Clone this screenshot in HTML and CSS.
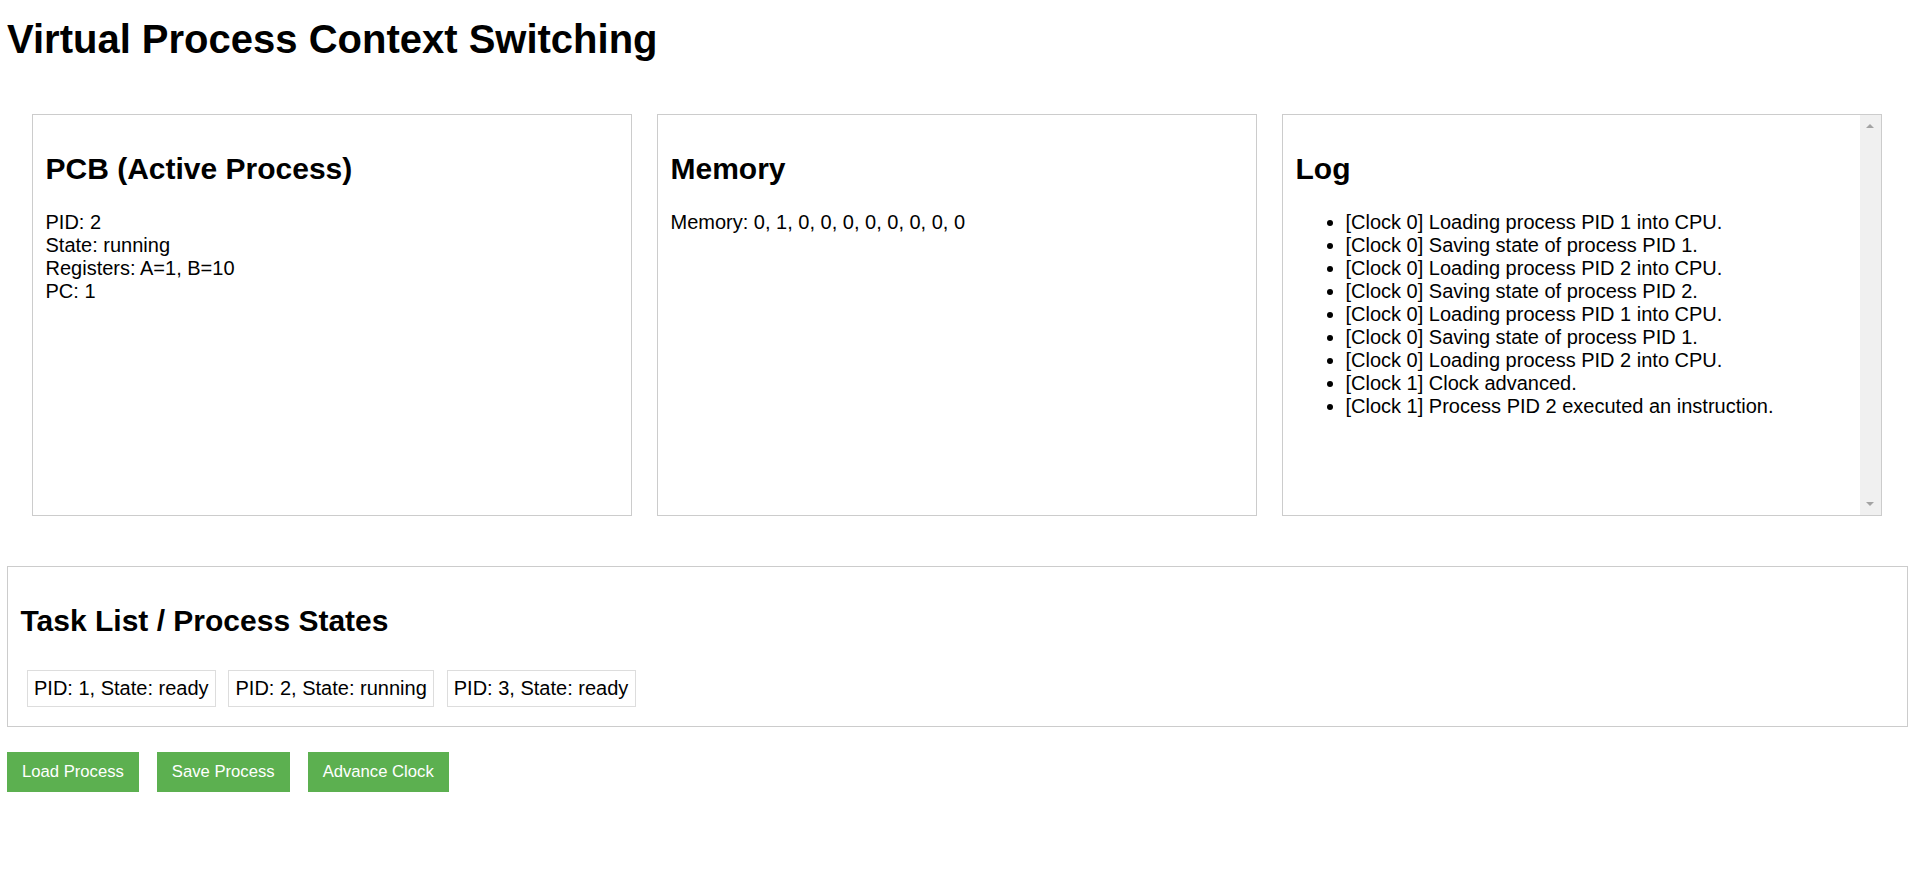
FILE: index.html
```html
<!DOCTYPE html>
<html lang="en">
<head>
<meta charset="utf-8">
<title>Virtual Process Context Switching</title>
<link rel="stylesheet" href="styles.css">
</head>
<body>
<h1 class="title">Virtual Process Context Switching</h1>
<div class="panels">
  <section class="panel">
    <h2 class="panel-title">PCB (Active Process)</h2>
    <div class="line">PID: 2</div>
    <div class="line">State: running</div>
    <div class="line">Registers: A=1, B=10</div>
    <div class="line">PC: 1</div>
  </section>
  <section class="panel">
    <h2 class="panel-title">Memory</h2>
    <div class="line">Memory: 0, 1, 0, 0, 0, 0, 0, 0, 0, 0</div>
  </section>
  <section class="panel log">
    <h2 class="panel-title">Log</h2>
    <ul class="log-list">
      <li>[Clock 0] Loading process PID 1 into CPU.</li>
      <li>[Clock 0] Saving state of process PID 1.</li>
      <li>[Clock 0] Loading process PID 2 into CPU.</li>
      <li>[Clock 0] Saving state of process PID 2.</li>
      <li>[Clock 0] Loading process PID 1 into CPU.</li>
      <li>[Clock 0] Saving state of process PID 1.</li>
      <li>[Clock 0] Loading process PID 2 into CPU.</li>
      <li>[Clock 1] Clock advanced.</li>
      <li>[Clock 1] Process PID 2 executed an instruction.</li>
    </ul>
    <div class="scrollbar" aria-hidden="true">
      <span class="arrow arrow-up"></span>
      <span class="arrow arrow-down"></span>
    </div>
  </section>
</div>
<section class="tasks">
  <h2 class="panel-title">Task List / Process States</h2>
  <div class="task-row">
    <div class="task">PID: 1, State: ready</div>
    <div class="task">PID: 2, State: running</div>
    <div class="task">PID: 3, State: ready</div>
  </div>
</section>
<div class="controls">
  <button class="btn">Load Process</button>
  <button class="btn">Save Process</button>
  <button class="btn">Advance Clock</button>
</div>
</body>
</html>
```
FILE: styles.css
```css
html, body {
  background: #ffffff;
}
body {
  margin: 0;
  padding: 8px 8px 8px 7px;
  font-family: "Liberation Sans", Arial, sans-serif;
  font-size: 20px;
  color: #000;
}
.title {
  margin: 9px 0 52px;
  font-size: 40px;
  font-weight: bold;
}
.panels {
  display: flex;
  gap: 25px;
  padding: 0 26px 0 25px;
}
.panel {
  flex: 0 0 600px;
  box-sizing: border-box;
  height: 402px;
  border: 1px solid #cccccc;
  padding: 12.5px;
}
.panel-title {
  font-size: 30px;
  font-weight: bold;
  margin: 24.9px 0;
}
.log {
  position: relative;
  overflow: hidden;
  padding-right: 33.5px;
}
.log-list {
  margin: 20px 0;
  padding-left: 50px;
}
.scrollbar {
  position: absolute;
  top: 0;
  right: 0;
  bottom: 0;
  width: 21px;
  background: #f0f0f0;
}
.arrow {
  position: absolute;
  left: 6px;
  width: 0;
  height: 0;
  border-left: 4px solid transparent;
  border-right: 4px solid transparent;
}
.arrow-up {
  top: 9px;
  border-bottom: 4px solid #a3a3a3;
}
.arrow-down {
  bottom: 9px;
  border-top: 4px solid #a3a3a3;
}
.tasks {
  margin-top: 50px;
  border: 1px solid #cccccc;
  padding: 12.5px;
}
.task-row {
  display: flex;
}
.task {
  margin: 6.25px;
  padding: 6.25px;
  border: 1px solid #dddddd;
}
.controls {
  display: flex;
  gap: 18px;
  margin-top: 25px;
}
.btn {
  font-family: "Liberation Sans", Arial, sans-serif;
  font-size: 16.67px;
  line-height: 20px;
  padding: 10px 15px;
  border: none;
  background: #5cb050;
  color: #ffffff;
  cursor: pointer;
}
```
